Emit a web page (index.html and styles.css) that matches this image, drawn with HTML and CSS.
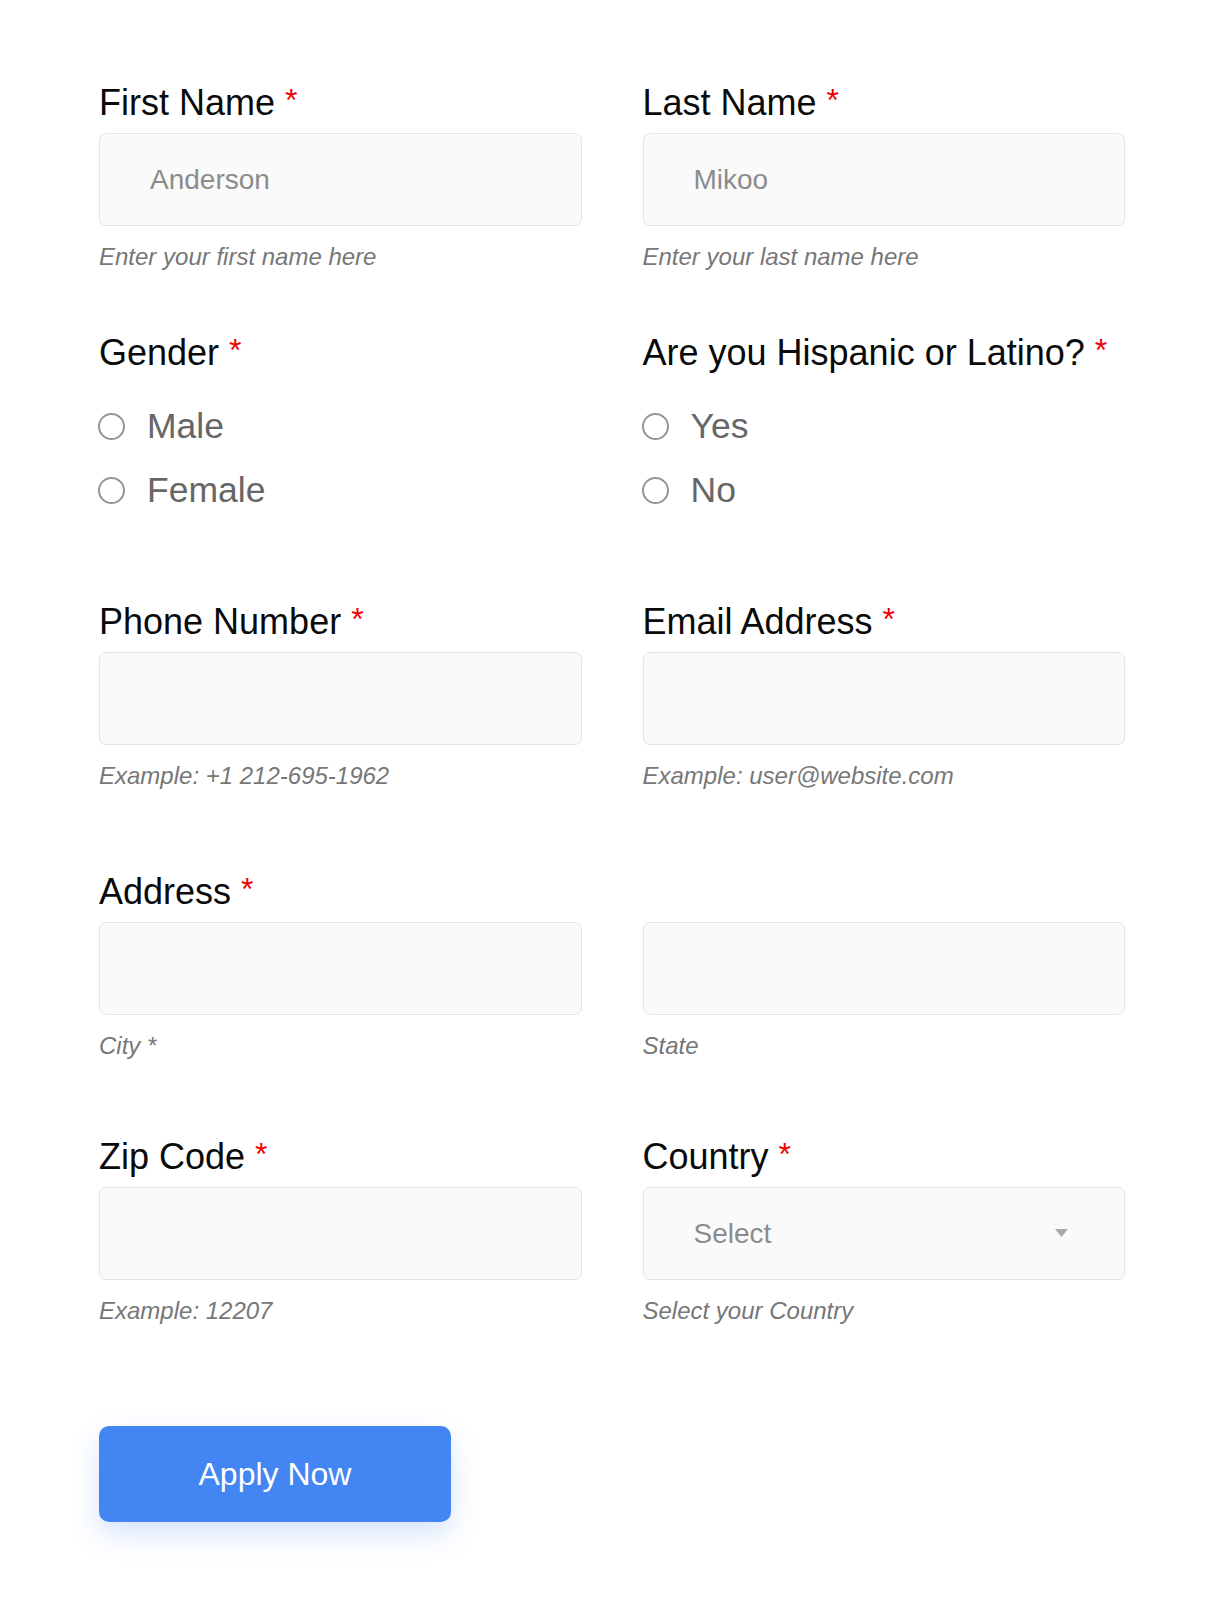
FILE: index.html
```html
<!DOCTYPE html>
<html lang="en">
<head>
<meta charset="utf-8">
<title>Application Form</title>
<link rel="stylesheet" href="styles.css">
</head>
<body>
<form class="form">
  <div class="row row-1">
    <div class="field">
      <label class="label">First Name <span class="req">*</span></label>
      <input class="input" type="text" placeholder="Anderson">
      <p class="help">Enter your first name here</p>
    </div>
    <div class="field">
      <label class="label">Last Name <span class="req">*</span></label>
      <input class="input" type="text" placeholder="Mikoo">
      <p class="help">Enter your last name here</p>
    </div>
  </div>

  <div class="row row-2">
    <div class="field">
      <div class="label">Gender <span class="req">*</span></div>
      <div class="options">
        <label class="option"><input class="radio" type="radio" name="gender"><span>Male</span></label>
        <label class="option"><input class="radio" type="radio" name="gender"><span>Female</span></label>
      </div>
    </div>
    <div class="field">
      <div class="label">Are you Hispanic or Latino? <span class="req">*</span></div>
      <div class="options">
        <label class="option"><input class="radio" type="radio" name="hisp"><span>Yes</span></label>
        <label class="option"><input class="radio" type="radio" name="hisp"><span>No</span></label>
      </div>
    </div>
  </div>

  <div class="row row-3">
    <div class="field">
      <label class="label">Phone Number <span class="req">*</span></label>
      <input class="input" type="text">
      <p class="help">Example: +1 212-695-1962</p>
    </div>
    <div class="field">
      <label class="label">Email Address <span class="req">*</span></label>
      <input class="input" type="text">
      <p class="help">Example: user@website.com</p>
    </div>
  </div>

  <div class="row row-4">
    <div class="field">
      <label class="label">Address <span class="req">*</span></label>
      <input class="input" type="text">
      <p class="help">City *</p>
    </div>
    <div class="field">
      <div class="label-spacer" aria-hidden="true"></div>
      <input class="input" type="text">
      <p class="help">State</p>
    </div>
  </div>

  <div class="row row-5">
    <div class="field">
      <label class="label">Zip Code <span class="req">*</span></label>
      <input class="input" type="text">
      <p class="help">Example: 12207</p>
    </div>
    <div class="field">
      <label class="label">Country <span class="req">*</span></label>
      <div class="select-wrap">
        <select class="select">
          <option>Select</option>
        </select>
        <svg class="caret" width="13" height="8" viewBox="0 0 13 8" aria-hidden="true"><path d="M0 0 H13 L6.5 8 Z" fill="#a9a9a9"/></svg>
      </div>
      <p class="help">Select your Country</p>
    </div>
  </div>

  <button class="submit" type="button">Apply Now</button>
</form>
</body>
</html>
```

FILE: styles.css
```css
* {
  box-sizing: border-box;
}

html, body {
  margin: 0;
  padding: 0;
  background: #ffffff;
}

body {
  font-family: "Liberation Sans", Arial, Helvetica, sans-serif;
  color: #0a0a0a;
}

.form {
  width: 1026px;
  margin: 0 0 0 99px;
  padding: 82px 0 60px;
}

.row {
  display: grid;
  grid-template-columns: 1fr 1fr;
  column-gap: 61px;
}

.row-2 { margin-top: 60px; }
.row-3 { margin-top: 90px; }
.row-4 { margin-top: 80px; }
.row-5 { margin-top: 75px; }

.field {
  min-width: 0;
}

.label {
  display: block;
  font-size: 36px;
  line-height: 42px;
  height: 42px;
  color: #0a0a0a;
  white-space: nowrap;
}

.label-spacer {
  height: 42px;
}

.req {
  color: #f00000;
  font-size: 32px;
  position: relative;
  top: -4px;
}

.input,
.select {
  display: block;
  width: 100%;
  height: 93px;
  margin: 9px 0 0;
  padding: 0 20px 0 50px;
  border: 1px solid #e4e4e4;
  border-radius: 7px;
  background: #fafafa;
  font-family: "Liberation Sans", Arial, Helvetica, sans-serif;
  font-size: 28px;
  color: #8c8c8c;
  outline: none;
}

.input::placeholder {
  color: #8c8c8c;
  opacity: 1;
}

.select-wrap {
  position: relative;
  margin-top: 9px;
}

.select-wrap .select {
  margin: 0;
  appearance: none;
  -webkit-appearance: none;
}

.caret {
  position: absolute;
  right: 57px;
  top: 42px;
  pointer-events: none;
}

.help {
  margin: 16px 0 0;
  font-size: 24px;
  line-height: 30px;
  font-style: italic;
  color: #777777;
}

.options {
  display: flex;
  flex-direction: column;
  gap: 22px;
  margin-top: 31px;
}

.option {
  display: flex;
  align-items: center;
  gap: 22px;
  height: 42px;
  font-size: 35.5px;
  line-height: 42px;
  color: #666666;
}

.radio {
  appearance: none;
  -webkit-appearance: none;
  width: 27px;
  height: 27px;
  margin: 0 0 0 -1px;
  border: 2px solid #959595;
  border-radius: 50%;
  background: #ffffff;
  flex: none;
}

.submit {
  display: block;
  margin-top: 100px;
  width: 352px;
  height: 96px;
  border: none;
  border-radius: 10px;
  background: #4385f3;
  color: #ffffff;
  font-family: "Liberation Sans", Arial, Helvetica, sans-serif;
  font-size: 32px;
  box-shadow: 0 12px 28px rgba(67, 133, 243, 0.22);
  cursor: pointer;
}
```
